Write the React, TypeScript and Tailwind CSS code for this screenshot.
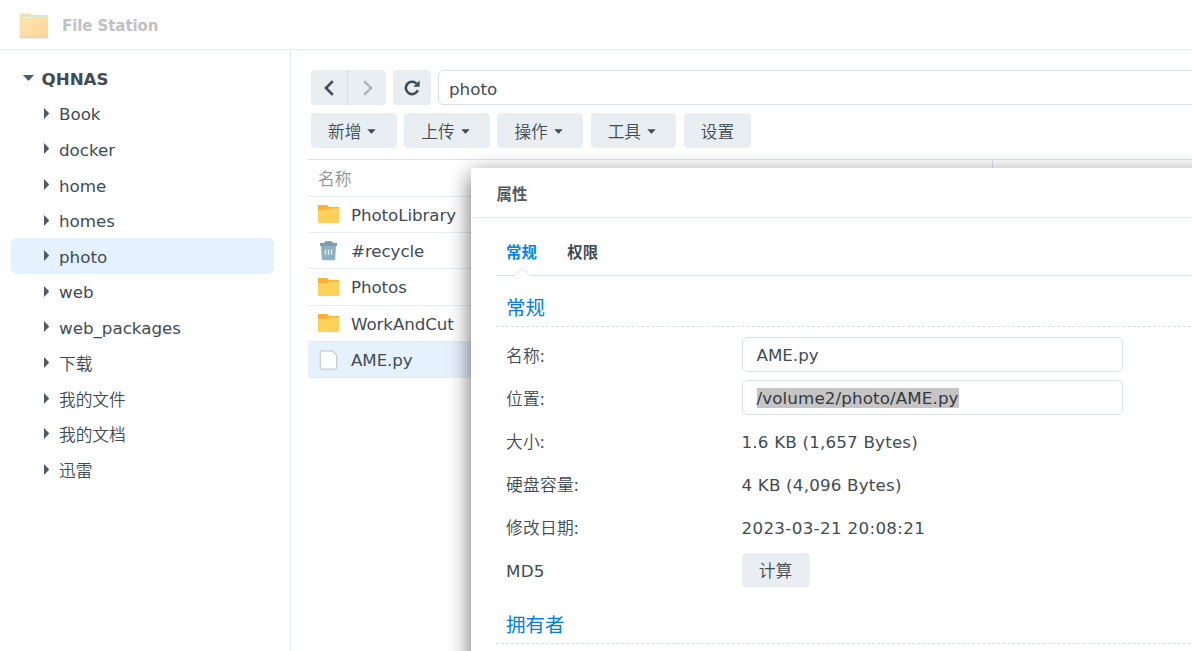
import type { ReactNode } from 'react';
import clsx from 'clsx';

interface FileItem {
  name: string;
  kind: 'folder' | 'recycle' | 'file';
}

const sharedFolders = ['Book', 'docker', 'home', 'homes', 'photo', 'web', 'web_packages'];
const localFolders = ['下载', '我的文件', '我的文档', '迅雷'];

const files: FileItem[] = [
  { name: 'PhotoLibrary', kind: 'folder' },
  { name: '#recycle', kind: 'recycle' },
  { name: 'Photos', kind: 'folder' },
  { name: 'WorkAndCut', kind: 'folder' },
  { name: 'AME.py', kind: 'file' },
];

// Lighter cut for Chinese labels, Latin text keeps the page font
const cjk = "font-['Noto_Sans_CJK_SC',sans-serif] font-[350]";

const AppLogo = () => (
  <svg width="30" height="26" viewBox="0 0 30 26" className="shrink-0">
    <defs>
      <linearGradient id="logo" x1="0" y1="0" x2="1" y2="1">
        <stop offset="0" stopColor="#ffe7ad" />
        <stop offset="1" stopColor="#ffd09c" />
      </linearGradient>
    </defs>
    <path d="M1 2q0-1.500 1.500-1.500h9l1.500 1.500h14.500q1.500 0 1.500 1.500v10H1z" fill="#fbdca0" />
    <path d="M3 2.300h24.500v5H3z" fill="#cde9d0" />
    <path d="M4 3.600h24v4H4z" fill="#e4f3dc" />
    <path d="M.5 5h10l2-1h16.500v19.500q0 1.500-1.500 1.500h-25.500q-1.500 0-1.500-1.500z" fill="url(#logo)" />
    <path d="M1 24.800h28" stroke="#e3cdc2" />
  </svg>
);

const FolderIcon = () => (
  <svg width="21" height="18" viewBox="0 0 21 18">
    <path d="M0 0h9l2 2H21V8H0z" fill="#f9b233" />
    <path d="M0 5h9l2-1.500H21v13.500q0 1-1 1H1q-1 0-1-1z" fill="#ffd05a" />
  </svg>
);

const RecycleIcon = () => (
  <svg width="21" height="20" viewBox="0 0 21 20">
    <path d="M6.500 2.200V1.200q0-1 1-1h6q1 0 1 1v1" fill="#7296a5" />
    <path d="M2 2h17v3H2z" fill="#7b9fae" />
    <path d="M3 5h15l-.8 13q-.1 1.300-1.400 1.300H5.200q-1.300 0-1.400-1.300z" fill="#8db1bf" />
    <path d="M7.500 8.800v5M10.500 8.800v5M13.500 8.800v5" stroke="#e3eff3" strokeWidth="1.300" />
  </svg>
);

const PageIcon = () => (
  <svg width="21" height="20" viewBox="0 0 21 20">
    <path
      d="M3.500.8h10.700l4.500 4.500v12.700q0 1.200-1.200 1.200h-14q-1.200 0-1.200-1.200V2q0-1.200 1.200-1.200z"
      fill="#fff"
      stroke="#c6c9cc"
      strokeWidth="1.200"
    />
  </svg>
);

const DownArrow = () => (
  <svg width="9" height="5" viewBox="0 0 9 5" className="mt-px">
    <path d="M.3.300h8.400L5.100 4.200q-.6.500-1.200 0z" fill="#414b55" />
  </svg>
);

const ToolButton = ({ label, menu = true }: { label: string; menu?: boolean }) => (
  <button
    className={clsx(
      'flex h-[35px] items-center justify-center rounded bg-[#e8eef2]',
      menu ? 'w-[85.500px] gap-1.5 pr-[3px]' : 'w-[67.500px]'
    )}
  >
    <span className={cjk}>{label}</span>
    {menu && <DownArrow />}
  </button>
);

const TreeItem = ({ name, className }: { name: string; className?: string }) => (
  <div className={clsx('flex h-[35.600px] items-center rounded-md pl-[33px]', name === 'photo' && 'bg-[#e5f1fd]')}>
    <svg width="5" height="11" viewBox="0 0 5 11">
      <path d="M0 0v11l4.600-4.700q.7-.8 0-1.600z" fill="#505a64" />
    </svg>
    <span className={clsx('ml-2.5', className)}>{name}</span>
  </div>
);

const Sidebar = () => (
  <aside className="w-[291px] shrink-0 border-r border-[#e6ebf0] pl-[11px] pr-4 pt-2.5">
    <div className="flex h-[35.600px] items-center pl-3">
      <svg width="11" height="6" viewBox="0 0 11 6">
        <path d="M0 0h11L6.300 5.200q-.8.800-1.600 0z" fill="#505a64" />
      </svg>
      <span className="ml-[7.500px] mt-0.5 font-bold">QHNAS</span>
    </div>
    {sharedFolders.map((name) => (
      <TreeItem key={name} name={name} className="mt-0.5" />
    ))}
    {localFolders.map((name) => (
      <TreeItem key={name} name={name} className={clsx('mt-px', cjk)} />
    ))}
  </aside>
);

const FileList = () => (
  <div className="-ml-[3px] mt-[11px] border-t border-[#dbe3ea]">
    <div className="flex h-[36.500px] items-center border-b border-[#e8edf1] text-[#8b9197]">
      <span className={clsx('h-full w-[685px] shrink-0 border-r border-[#dbe3ea] pl-2.5 pt-1.5', cjk)}>名称</span>
    </div>
    {files.map((file) => (
      <div
        key={file.name}
        className={clsx('flex h-[36.400px] items-center border-b border-[#e8edf1] pl-2.5', file.kind === 'file' && 'bg-[#e5f1fd]')}
      >
        {file.kind === 'folder' && <FolderIcon />}
        {file.kind === 'recycle' && <RecycleIcon />}
        {file.kind === 'file' && <PageIcon />}
        <span className="ml-3 mt-px tracking-[-0.080px]">{file.name}</span>
      </div>
    ))}
  </div>
);

const Field = ({ label, children }: { label: string; children: ReactNode }) => (
  <div className="flex h-[43.100px] items-center pl-2.5">
    <span className={clsx('w-[235.500px] shrink-0 tracking-[0.300px]', label === 'MD5' ? 'mt-0.5' : cjk)}>{label}</span>
    {children}
  </div>
);

const SectionTitle = ({ children }: { children: ReactNode }) => (
  <h2 className="flex h-[51px] items-center border-b border-dashed border-[#d8e0e6] pl-2.5 pt-[15px] text-[19.500px] text-[#0080df]">
    {children}
  </h2>
);

const inputBox = 'flex h-[35px] w-[381.500px] items-center rounded-[5px] border border-[#dbe3ea] pl-3.5';

const PropertiesDialog = () => (
  <section className="absolute left-[471px] top-[168px] h-[600px] w-[800px] rounded-[3px] bg-white shadow-[0_7px_22px_rgba(0,0,0,0.6)]">
    <div className="flex h-[50px] items-center border-b border-[#e8edf1] pl-[25.500px] pt-1 text-[15.400px] font-bold text-[#505a64]">
      属性
    </div>
    <div className="ml-[25px]">
      <div className="relative flex h-[58px] items-center gap-[30.500px] border-b border-[#dbe3ea] pl-2.5 pt-3 text-[15.400px] font-bold">
        <span className="text-[#0086e5]">常规</span>
        <span>权限</span>
        <svg width="16" height="9" viewBox="0 0 16 9" className="absolute -bottom-px left-[18px]">
          <path d="M0 9L8 1l8 8" fill="#fff" />
          <path d="M.5 8.500L8 1l7.500 7.500" fill="none" stroke="#dbe3ea" />
        </svg>
      </div>
      <SectionTitle>常规</SectionTitle>
      <div className="h-[266px] pt-1.5">
        <Field label="名称:">
          <div className={inputBox}>AME.py</div>
        </Field>
        <Field label="位置:">
          <div className={inputBox}>
            <span className="h-5 bg-[#c5c5c5] leading-5 tracking-[0.120px] text-[#33383d]">/volume2/photo/AME.py</span>
          </div>
        </Field>
        <Field label="大小:">
          <span className="mt-0.5 tracking-[0.200px]">1.6 KB (1,657 Bytes)</span>
        </Field>
        <Field label="硬盘容量:">
          <span className="mt-0.5 tracking-[0.200px]">4 KB (4,096 Bytes)</span>
        </Field>
        <Field label="修改日期:">
          <span className="mt-0.5 tracking-[0.340px]">2023-03-21 20:08:21</span>
        </Field>
        <Field label="MD5">
          <button className={clsx('h-[34px] w-[68px] rounded bg-[#e8eef2] pb-px', cjk)}>计算</button>
        </Field>
      </div>
      <SectionTitle>拥有者</SectionTitle>
    </div>
  </section>
);

const App = () => {
  return (
    <div className="relative flex h-[651px] w-[1192px] flex-col overflow-hidden bg-white font-['DejaVu_Sans','Noto_Sans_CJK_SC',sans-serif] text-[16.700px] leading-6 text-[#414b55]">
      <header className="flex h-[50px] shrink-0 items-center border-b border-[#e3e9ef] pl-[19px] pt-0.5">
        <AppLogo />
        <span className="ml-[13px] text-[15px] font-bold tracking-[-0.080px] text-[#bfc1c3]">File Station</span>
      </header>
      <div className="flex min-h-0 flex-1">
        <Sidebar />
        <main className="min-w-0 flex-1 pl-5 pt-5">
          <div className="flex gap-[7.500px]">
            <div className="flex h-[35px] shrink-0 overflow-hidden rounded bg-[#e8eef2]">
              <button className="flex w-[37px] items-center justify-center border-r border-[#cfdae4]">
                <svg width="10" height="16" viewBox="0 0 10 16" fill="none" stroke="#414b55" strokeWidth="2.600">
                  <path d="M8.800 1.200L2 8l6.800 6.800" />
                </svg>
              </button>
              <button className="flex w-[37.500px] items-center justify-center pl-0.5">
                <svg width="10" height="16" viewBox="0 0 10 16" fill="none" stroke="#acb4bb" strokeWidth="2.400">
                  <path d="M1.200 1.200L8 8l-6.800 6.800" />
                </svg>
              </button>
            </div>
            <button className="flex h-[35px] w-[37.500px] shrink-0 items-center justify-center rounded bg-[#e8eef2]">
              <svg width="16" height="16" viewBox="0 0 16 16">
                <path d="M13.800 10.200A6.200 6.200 0 1 1 12.500 3.600" fill="none" stroke="#414b55" strokeWidth="2.600" />
                <path d="M15.600 .5v6.300H9.300z" fill="#414b55" />
              </svg>
            </button>
            <div className="flex h-[35px] w-[800px] shrink-0 items-center rounded-[5px] border border-[#d5dfe7] pl-2.5 pt-0.5">
              photo
            </div>
          </div>
          <div className="mt-2 flex gap-[7.700px]">
            <ToolButton label="新增" />
            <ToolButton label="上传" />
            <ToolButton label="操作" />
            <ToolButton label="工具" />
            <ToolButton label="设置" menu={false} />
          </div>
          <FileList />
        </main>
      </div>
      <PropertiesDialog />
    </div>
  );
};

export default App;
